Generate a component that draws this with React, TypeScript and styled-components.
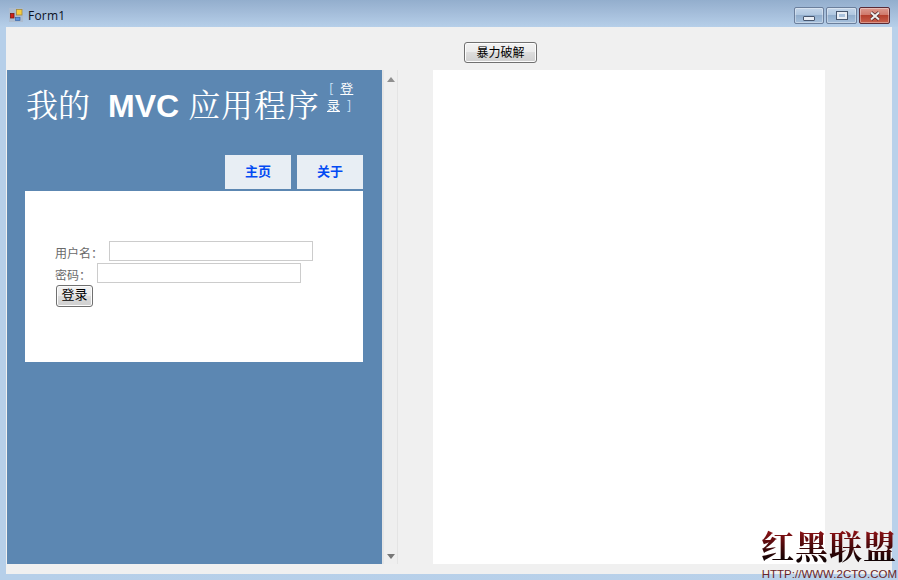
import React from "react";
import styled, { createGlobalStyle } from "styled-components";

const Global = createGlobalStyle`
  html, body { margin: 0; padding: 0; width: 898px; height: 580px; overflow: hidden; }
  #root { width: 898px; height: 580px; }
`;

const Win = styled.div`
  position: relative;
  width: 898px;
  height: 580px;
  overflow: hidden;
  display: flex;
  flex-direction: column;
  background: linear-gradient(90deg, #b6cfe9 0, #b9d1ea 100%);
  font-family: "Liberation Sans", "Noto Sans CJK SC", sans-serif;
`;
const TitleBar = styled.div`
  height: 27px;
  flex: none;
  display: flex;
  align-items: flex-start;
  padding: 8px 8px 0 9px;
  box-sizing: border-box;
  background: linear-gradient(180deg, #93aecd 0, #a3bcd9 12px, #b6cfe9 27px);
`;
const AppIcon = styled.svg`
  width: 14px;
  height: 14px;
  flex: none;
  margin-right: 5px;
`;
const TitleText = styled.span`
  font: 12px/16px "Open Sans", "Liberation Sans", sans-serif;
  letter-spacing: 0.2px;
  color: #0a0f1e;
  flex: 1;
`;
const WinButtons = styled.div`
  display: flex;
  gap: 2px;
  margin-top: -1px;
`;
const WinBtn = styled.div<{ $w: number; $close?: boolean }>`
  width: ${(p) => p.$w}px;
  height: 15px;
  border: 1px solid ${(p) => (p.$close ? "#5a2a35" : "#6b7f9c")};
  border-radius: 2px;
  display: flex;
  align-items: center;
  justify-content: center;
  background: ${(p) =>
    p.$close
      ? "linear-gradient(180deg, #dc9a90 0, #d07a6c 45%, #b5402e 50%, #c8604c 100%)"
      : "linear-gradient(180deg, #c4d6ea 0, #b0c7e0 45%, #92aecd 50%, #a6c0dc 100%)"};
  box-shadow: inset 0 0 0 1px rgba(255, 255, 255, 0.35);
`;
const MinGlyph = styled.div`
  width: 10px;
  height: 3px;
  margin-top: 5px;
  background: #e8edf4;
  border: 1px solid #47566e;
  border-radius: 1px;
`;
const MaxGlyph = styled.div`
  width: 6px;
  height: 3px;
  background: #aac2dd;
  border: 2px solid #e8edf4;
  outline: 1px solid #47566e;
`;
const Client = styled.div`
  flex: none;
  height: 547px;
  margin: 0 6px;
  background: #f0f0f0;
  display: flex;
  flex-direction: column;
`;
const Toolbar = styled.div`
  height: 43px;
  flex: none;
  display: flex;
  padding: 15px 0 0 458px;
  box-sizing: border-box;
`;
const WinFormButton = styled.button<{ $w: number; $h: number; $size: number; $lift: number }>`
  width: ${(p) => p.$w}px;
  height: ${(p) => p.$h}px;
  padding: 0 0 ${(p) => p.$lift}px;
  box-sizing: border-box;
  border: 1px solid #707070;
  border-radius: 3px;
  background: linear-gradient(180deg, #f2f2f2 0, #ebebeb 48%, #dddddd 50%, #cfcfcf 100%);
  box-shadow: inset 0 0 0 1px #fcfcfc;
  color: #000;
  font: ${(p) => p.$size}px/1 "Noto Sans CJK SC", sans-serif;
`;
const Body = styled.div`
  display: flex;
  height: 494px;
  flex: none;
  padding-left: 1px;
`;
const BrowserPane = styled.div`
  width: 375px;
  flex: none;
  background: #5c87b2;
  display: flex;
  flex-direction: column;
  padding: 11px 19px 0 18px;
  box-sizing: border-box;
`;
const Header = styled.div`
  display: flex;
  align-items: flex-start;
  height: 74px;
`;
const Title = styled.h1`
  margin: -1px 0 0;
  padding: 0 0 0 1px;
  width: 301px;
  flex: none;
  color: #fff;
  font: 400 32px/46px "Noto Serif CJK SC", "Liberation Serif", "Noto Sans CJK SC", serif;
  white-space: nowrap;
`;
const Mvc = styled.b`
  font-family: "Liberation Sans", sans-serif;
  font-weight: 700;
  margin: 0 9px 0 18px;
`;
const Wide = styled.span`
  letter-spacing: 0.9px;
`;
const LoginBox = styled.div`
  width: 29px;
  margin-top: -2px;
  color: #cfe6fb;
  font: 13px/17px "Noto Sans CJK SC", sans-serif;
  word-spacing: 4px;
  white-space: nowrap;
`;
const LoginLine = styled.div<{ $indent: number }>`
  padding-left: ${(p) => p.$indent}px;
`;
const LoginLink = styled.span`
  color: #fff;
  text-decoration: underline;
  text-decoration-skip-ink: none;
  text-underline-offset: 1px;
`;
const Tabs = styled.div`
  display: flex;
  justify-content: flex-end;
  gap: 6px;
`;
const Tab = styled.div`
  width: 66px;
  height: 34px;
  background: #e8eef4;
  color: #034af3;
  font: 700 13px/32px "Noto Sans CJK SC", sans-serif;
  text-align: center;
`;
const Page = styled.div`
  margin-top: 2px;
  height: 171px;
  background: #fff;
  padding: 50px 0 0 30px;
  box-sizing: border-box;
  color: #696969;
  font: 12px/1 "Noto Sans CJK SC", sans-serif;
`;
const Row = styled.div`
  display: flex;
  align-items: center;
  height: 20px;
  margin-bottom: 2px;
`;
const Label = styled.span<{ $w: number }>`
  width: ${(p) => p.$w}px;
  flex: none;
  padding-top: 4px;
`;
const Input = styled.input`
  width: 204px;
  height: 20px;
  box-sizing: border-box;
  border: 1px solid #cccccc;
  background: #fff;
  padding: 0;
  outline: none;
`;
const SubmitWrap = styled.div`
  padding-left: 1px;
`;
const ScrollBar = styled.div`
  width: 16px;
  flex: none;
  box-sizing: border-box;
  display: flex;
  flex-direction: column;
  justify-content: space-between;
  align-items: center;
  padding: 7px 0 5px;
  background: #efefef;
  border-left: 2px solid #e6e6e6;
  border-right: 1px solid #e4e4e4;
`;
const Arrow = styled.svg`
  width: 8px;
  height: 5px;
  display: block;
`;
const RightPane = styled.div`
  width: 392px;
  flex: none;
  margin-left: 35px;
  background: #fff;
`;
const Watermark = styled.div`
  position: absolute;
  right: 0;
  bottom: 0;
  width: 140px;
  text-align: right;
`;
const MarkChars = styled.div`
  font: 700 33px/48px "Noto Serif CJK SC", "Noto Sans CJK SC", serif;
  background: linear-gradient(180deg, #8e1216 20%, #3a0708 60%, #120304 82%);
  -webkit-background-clip: text;
  background-clip: text;
  color: transparent;
  letter-spacing: 1px;
  white-space: nowrap;
  margin-right: 1px;
`;
const MarkUrl = styled.div`
  font: 11.5px/11px "Liberation Sans", sans-serif;
  color: #6a2428;
  white-space: nowrap;
  margin-right: 1px;
`;

export default function App() {
  return (
    <Win>
      <Global />
      <TitleBar>
        <AppIcon viewBox="0 0 14 14">
          <rect x="0" y="0" width="14" height="14" fill="#adbccf" />
          <rect x="7.5" y="1.5" width="5.5" height="5.5" fill="#f6cc3e" stroke="#a58a3a" strokeWidth="0.8" />
          <rect x="1.5" y="5.5" width="3.5" height="4.5" fill="#d0201a" stroke="#7a1a12" strokeWidth="0.8" />
          <rect x="6.5" y="9.5" width="4.5" height="3" fill="#5b92e0" stroke="#2b5aa0" strokeWidth="0.6" />
        </AppIcon>
        <TitleText>Form1</TitleText>
        <WinButtons>
          <WinBtn $w={28}><MinGlyph /></WinBtn>
          <WinBtn $w={29}><MaxGlyph /></WinBtn>
          <WinBtn $w={29} $close>
            <svg width="14" height="10" viewBox="0 0 14 10">
              <path d="M3 1.5 L11 8.5 M11 1.5 L3 8.5" stroke="#4a1f24" strokeWidth="3.6" />
              <path d="M3 1.5 L11 8.5 M11 1.5 L3 8.5" stroke="#eee" strokeWidth="2.2" />
            </svg>
          </WinBtn>
        </WinButtons>
      </TitleBar>
      <Client>
        <Toolbar>
          <WinFormButton $w={73} $h={21} $size={12} $lift={2}>暴力破解</WinFormButton>
        </Toolbar>
        <Body>
          <BrowserPane>
            <Header>
              <Title>我的<Mvc>MVC</Mvc><Wide>应用程序</Wide></Title>
              <LoginBox>
                <LoginLine $indent={2}>[ <LoginLink>登</LoginLink></LoginLine>
                <LoginLine $indent={0}><LoginLink>录</LoginLink> ]</LoginLine>
              </LoginBox>
            </Header>
            <Tabs>
              <Tab>主页</Tab>
              <Tab>关于</Tab>
            </Tabs>
            <Page>
              <Row><Label $w={54}>用户名：</Label><Input /></Row>
              <Row><Label $w={42}>密码：</Label><Input /></Row>
              <SubmitWrap><WinFormButton $w={37} $h={22} $size={13} $lift={5}>登录</WinFormButton></SubmitWrap>
            </Page>
          </BrowserPane>
          <ScrollBar>
            <Arrow viewBox="0 0 8 5"><path d="M4 0 L8 5 L0 5 Z" fill="#8f8f8f" /></Arrow>
            <Arrow viewBox="0 0 8 5"><path d="M0 0 L8 0 L4 5 Z" fill="#777" /></Arrow>
          </ScrollBar>
          <RightPane />
        </Body>
      </Client>
      <Watermark>
        <MarkChars>红黑联盟</MarkChars>
        <MarkUrl>HTTP://WWW.2CTO.COM</MarkUrl>
      </Watermark>
    </Win>
  );
}
